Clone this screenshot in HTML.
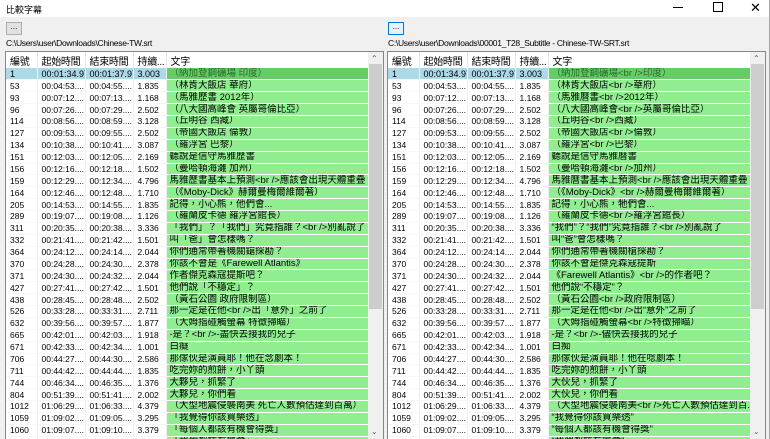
<!DOCTYPE html>
<html><head><meta charset="utf-8"><style>
*{margin:0;padding:0;box-sizing:border-box}
body{width:770px;height:439px;overflow:hidden;background:#f0f0f0;font-family:"Liberation Sans","Noto Sans CJK TC",sans-serif;position:relative;color:#000}
.tb{position:absolute;left:0;top:0;width:770px;height:17px;background:#fff;font-size:9px;}
.tb .t{position:absolute;left:6px;top:3px}
.btn{position:absolute;width:16px;height:13px;background:#e1e1e1;border:1px solid #adadad;font-size:8px;text-align:center;line-height:8px}
.path{position:absolute;top:38px;font-size:8.5px;white-space:nowrap;letter-spacing:-0.3px}
.lv{position:absolute;top:51px;height:388px;background:#fff;border:1px solid #828790;border-bottom:none;overflow:hidden}
table{border-collapse:collapse;table-layout:fixed;position:absolute;left:0;top:0}
th{height:16px;font-weight:normal;font-size:10px;text-align:left;padding-left:4px;border-right:1px solid #e5e5e5;white-space:nowrap;overflow:hidden;letter-spacing:-0.3px}
td{height:11.88px;font-size:8.5px;padding-left:4px;white-space:nowrap;overflow:hidden;text-overflow:clip;border-right:1px solid #f0f0f0;border-bottom:1px solid #f7f7f7;line-height:10px}
td.g{background:#90ee90;border-bottom:1px solid #fff;font-size:9.5px;padding-left:3px}
tr.s td{background:#add8e6;font-size:9px}
tr.s td.g{background:#66cc66;color:#2a6a2a;font-size:9.5px}
.sb{position:absolute;top:0;width:15px;height:388px;background:#f0f0f0}
.th{position:absolute;left:1px;top:12px;width:13px;height:245px;background:#cdcdcd}
.ar{position:absolute;left:3px;font-size:8px;color:#606060}
</style></head><body>
<div class="tb"><span class="t">比較字幕</span>
<span style="position:absolute;left:673px;top:7px;width:10px;height:1px;background:#000"></span>
<span style="position:absolute;left:713px;top:2px;width:10px;height:10px;border:1px solid #000"></span>
<span style="position:absolute;left:750px;top:0px;font-size:13px">✕</span></div>
<div class="btn" style="left:6px;top:22px">...</div>
<div class="btn" style="left:388px;top:22px;border-color:#0078d7;background:#e5f1fb">...</div>
<div class="path" style="left:6px">C:\Users\user\Downloads\Chinese-TW.srt</div>
<div class="path" style="left:388px">C:\Users\user\Downloads\00001_T28_Subtitle - Chinese-TW-SRT.srt</div>

<div class="lv" style="left:5px;width:379px">
<table style="width:363px"><colgroup><col style="width:31px"><col style="width:48px"><col style="width:48px"><col style="width:33px"><col style="width:203px"></colgroup>
<tr><th>編號</th><th>起始時間</th><th>結束時間</th><th>持續...</th><th>文字</th></tr>
<tr class="s"><td>1</td><td>00:01:34.97</td><td>00:01:37.97</td><td>3.003</td><td class="g">（納加登鋼礦場 印度）</td></tr>
<tr><td>53</td><td>00:04:53....</td><td>00:04:55....</td><td>1.835</td><td class="g">（林肯大飯店 華府）</td></tr>
<tr><td>93</td><td>00:07:12....</td><td>00:07:13....</td><td>1.168</td><td class="g">（馬雅歷書 2012年）</td></tr>
<tr><td>96</td><td>00:07:26....</td><td>00:07:29....</td><td>2.502</td><td class="g">（八大國高峰會 英屬哥倫比亞）</td></tr>
<tr><td>114</td><td>00:08:56....</td><td>00:08:59....</td><td>3.128</td><td class="g">（丘明谷 西藏）</td></tr>
<tr><td>127</td><td>00:09:53....</td><td>00:09:55....</td><td>2.502</td><td class="g">（帝國大飯店 倫敦）</td></tr>
<tr><td>134</td><td>00:10:38....</td><td>00:10:41....</td><td>3.087</td><td class="g">（羅浮宮 巴黎）</td></tr>
<tr><td>151</td><td>00:12:03....</td><td>00:12:05....</td><td>2.169</td><td class="g">聽說是信守馬雅歷書</td></tr>
<tr><td>156</td><td>00:12:16....</td><td>00:12:18....</td><td>1.502</td><td class="g">（曼哈頓海灘 加州）</td></tr>
<tr><td>159</td><td>00:12:29....</td><td>00:12:34....</td><td>4.796</td><td class="g">馬雅歷書基本上預測&lt;br /&gt;應該會出現天體重疊</td></tr>
<tr><td>164</td><td>00:12:46....</td><td>00:12:48....</td><td>1.710</td><td class="g">（《Moby-Dick》赫爾曼梅爾維爾著）</td></tr>
<tr><td>205</td><td>00:14:53....</td><td>00:14:55....</td><td>1.835</td><td class="g">記得，小心熊，他們會...</td></tr>
<tr><td>289</td><td>00:19:07....</td><td>00:19:08....</td><td>1.126</td><td class="g">（羅蘭皮卡德 羅浮宮館長）</td></tr>
<tr><td>311</td><td>00:20:35....</td><td>00:20:38....</td><td>3.336</td><td class="g">「我們」？「我們」究竟指誰？&lt;br /&gt;別亂說了</td></tr>
<tr><td>332</td><td>00:21:41....</td><td>00:21:42....</td><td>1.501</td><td class="g">叫「爸」會怎樣嗎？</td></tr>
<tr><td>364</td><td>00:24:12....</td><td>00:24:14....</td><td>2.044</td><td class="g">你們通常帶著機關鎗探勘？</td></tr>
<tr><td>370</td><td>00:24:28....</td><td>00:24:30....</td><td>2.378</td><td class="g">你該不會是《Farewell Atlantis》</td></tr>
<tr><td>371</td><td>00:24:30....</td><td>00:24:32....</td><td>2.044</td><td class="g">作者傑克森寇提斯吧？</td></tr>
<tr><td>427</td><td>00:27:41....</td><td>00:27:42....</td><td>1.501</td><td class="g">他們說「不穩定」？</td></tr>
<tr><td>438</td><td>00:28:45....</td><td>00:28:48....</td><td>2.502</td><td class="g">（黃石公園 政府限制區）</td></tr>
<tr><td>526</td><td>00:33:28....</td><td>00:33:31....</td><td>2.711</td><td class="g">那一定是在他&lt;br /&gt;出「意外」之前了</td></tr>
<tr><td>632</td><td>00:39:56....</td><td>00:39:57....</td><td>1.877</td><td class="g">（大姆指碰觸螢幕 特徵掃瞄）</td></tr>
<tr><td>665</td><td>00:42:01....</td><td>00:42:03....</td><td>1.918</td><td class="g">-是？&lt;br /&gt;-盡快去接我的兒子</td></tr>
<tr><td>671</td><td>00:42:33....</td><td>00:42:34....</td><td>1.001</td><td class="g">白癡</td></tr>
<tr><td>706</td><td>00:44:27....</td><td>00:44:30....</td><td>2.586</td><td class="g">那傢伙是演員耶！他在念劇本！</td></tr>
<tr><td>711</td><td>00:44:42....</td><td>00:44:44....</td><td>1.835</td><td class="g">吃完妳的煎餅，小丫頭</td></tr>
<tr><td>744</td><td>00:46:34....</td><td>00:46:35....</td><td>1.376</td><td class="g">大夥兒，抓緊了</td></tr>
<tr><td>804</td><td>00:51:39....</td><td>00:51:41....</td><td>2.002</td><td class="g">大夥兒，你們看</td></tr>
<tr><td>1012</td><td>01:06:29....</td><td>01:06:33....</td><td>4.379</td><td class="g">（大型地震侵襲南美 死亡人數預估達到百萬）</td></tr>
<tr><td>1059</td><td>01:09:02....</td><td>01:09:05....</td><td>3.295</td><td class="g">「我覺得你該買樂透」</td></tr>
<tr><td>1060</td><td>01:09:07....</td><td>01:09:10....</td><td>3.379</td><td class="g">「每個人都該有機會得獎」</td></tr>
<tr><td>1061</td><td>01:09:10....</td><td>01:09:12....</td><td>2.000</td><td class="g">「我們都該有機會」</td></tr>
</table>
<div class="sb" style="left:362px"><span class="ar" style="top:2px">⌃</span><div class="th"></div><span class="ar" style="top:375px">⌄</span></div>
</div>

<div class="lv" style="left:387px;width:379px">
<table style="width:363px"><colgroup><col style="width:31px"><col style="width:48px"><col style="width:48px"><col style="width:33px"><col style="width:203px"></colgroup>
<tr><th>編號</th><th>起始時間</th><th>結束時間</th><th>持續...</th><th>文字</th></tr>
<tr class="s"><td>1</td><td>00:01:34.97</td><td>00:01:37.97</td><td>3.003</td><td class="g">（納加登鋼礦場&lt;br /&gt;印度）</td></tr>
<tr><td>53</td><td>00:04:53....</td><td>00:04:55....</td><td>1.835</td><td class="g">（林肯大飯店&lt;br /&gt;華府）</td></tr>
<tr><td>93</td><td>00:07:12....</td><td>00:07:13....</td><td>1.168</td><td class="g">（馬雅曆書&lt;br /&gt;2012年）</td></tr>
<tr><td>96</td><td>00:07:26....</td><td>00:07:29....</td><td>2.502</td><td class="g">（八大國高峰會&lt;br /&gt;英屬哥倫比亞）</td></tr>
<tr><td>114</td><td>00:08:56....</td><td>00:08:59....</td><td>3.128</td><td class="g">（丘明谷&lt;br /&gt;西藏）</td></tr>
<tr><td>127</td><td>00:09:53....</td><td>00:09:55....</td><td>2.502</td><td class="g">（帝國大飯店&lt;br /&gt;倫敦）</td></tr>
<tr><td>134</td><td>00:10:38....</td><td>00:10:41....</td><td>3.087</td><td class="g">（羅浮宮&lt;br /&gt;巴黎）</td></tr>
<tr><td>151</td><td>00:12:03....</td><td>00:12:05....</td><td>2.169</td><td class="g">聽說是信守馬雅曆書</td></tr>
<tr><td>156</td><td>00:12:16....</td><td>00:12:18....</td><td>1.502</td><td class="g">（曼哈頓海灘&lt;br /&gt;加州）</td></tr>
<tr><td>159</td><td>00:12:29....</td><td>00:12:34....</td><td>4.796</td><td class="g">馬雅曆書基本上預測&lt;br /&gt;應該會出現天體重疊</td></tr>
<tr><td>164</td><td>00:12:46....</td><td>00:12:48....</td><td>1.710</td><td class="g">（《Moby-Dick》&lt;br /&gt;赫爾曼梅爾維爾著）</td></tr>
<tr><td>205</td><td>00:14:53....</td><td>00:14:55....</td><td>1.835</td><td class="g">記得，小心熊，牠們會...</td></tr>
<tr><td>289</td><td>00:19:07....</td><td>00:19:08....</td><td>1.126</td><td class="g">（羅蘭皮卡德&lt;br /&gt;羅浮宮館長）</td></tr>
<tr><td>311</td><td>00:20:35....</td><td>00:20:38....</td><td>3.336</td><td class="g">“我們”？“我們”究竟指誰？&lt;br /&gt;別亂說了</td></tr>
<tr><td>332</td><td>00:21:41....</td><td>00:21:42....</td><td>1.501</td><td class="g">叫“爸”會怎樣嗎？</td></tr>
<tr><td>364</td><td>00:24:12....</td><td>00:24:14....</td><td>2.044</td><td class="g">你們通常帶著機關槍探勘？</td></tr>
<tr><td>370</td><td>00:24:28....</td><td>00:24:30....</td><td>2.378</td><td class="g">你該不會是傑克森寇提斯</td></tr>
<tr><td>371</td><td>00:24:30....</td><td>00:24:32....</td><td>2.044</td><td class="g">《Farewell Atlantis》&lt;br /&gt;的作者吧？</td></tr>
<tr><td>427</td><td>00:27:41....</td><td>00:27:42....</td><td>1.501</td><td class="g">他們說“不穩定”？</td></tr>
<tr><td>438</td><td>00:28:45....</td><td>00:28:48....</td><td>2.502</td><td class="g">（黃石公園&lt;br /&gt;政府限制區）</td></tr>
<tr><td>526</td><td>00:33:28....</td><td>00:33:31....</td><td>2.711</td><td class="g">那一定是在他&lt;br /&gt;出“意外”之前了</td></tr>
<tr><td>632</td><td>00:39:56....</td><td>00:39:57....</td><td>1.877</td><td class="g">（大姆指碰觸螢幕&lt;br /&gt;特徵掃瞄）</td></tr>
<tr><td>665</td><td>00:42:01....</td><td>00:42:03....</td><td>1.918</td><td class="g">-是？&lt;br /&gt;-儘快去接我的兒子</td></tr>
<tr><td>671</td><td>00:42:33....</td><td>00:42:34....</td><td>1.001</td><td class="g">白痴</td></tr>
<tr><td>706</td><td>00:44:27....</td><td>00:44:30....</td><td>2.586</td><td class="g">那傢伙是演員耶！他在唸劇本！</td></tr>
<tr><td>711</td><td>00:44:42....</td><td>00:44:44....</td><td>1.835</td><td class="g">吃完妳的煎餅，小丫頭</td></tr>
<tr><td>744</td><td>00:46:34....</td><td>00:46:35....</td><td>1.376</td><td class="g">大伙兒，抓緊了</td></tr>
<tr><td>804</td><td>00:51:39....</td><td>00:51:41....</td><td>2.002</td><td class="g">大伙兒，你們看</td></tr>
<tr><td>1012</td><td>01:06:29....</td><td>01:06:33....</td><td>4.379</td><td class="g">（大型地震侵襲南美&lt;br /&gt;死亡人數預估達到百...</td></tr>
<tr><td>1059</td><td>01:09:02....</td><td>01:09:05....</td><td>3.295</td><td class="g">“我覺得你該買樂透”</td></tr>
<tr><td>1060</td><td>01:09:07....</td><td>01:09:10....</td><td>3.379</td><td class="g">“每個人都該有機會得獎”</td></tr>
<tr><td>1061</td><td>01:09:10....</td><td>01:09:12....</td><td>2.000</td><td class="g">“我們都該有機會”</td></tr>
</table>
<div class="sb" style="left:362px"><span class="ar" style="top:2px">⌃</span><div class="th"></div><span class="ar" style="top:375px">⌄</span></div>
</div>
<div style="position:absolute;left:769px;top:0;width:1px;height:439px;background:#aaa"></div>
</body></html>
